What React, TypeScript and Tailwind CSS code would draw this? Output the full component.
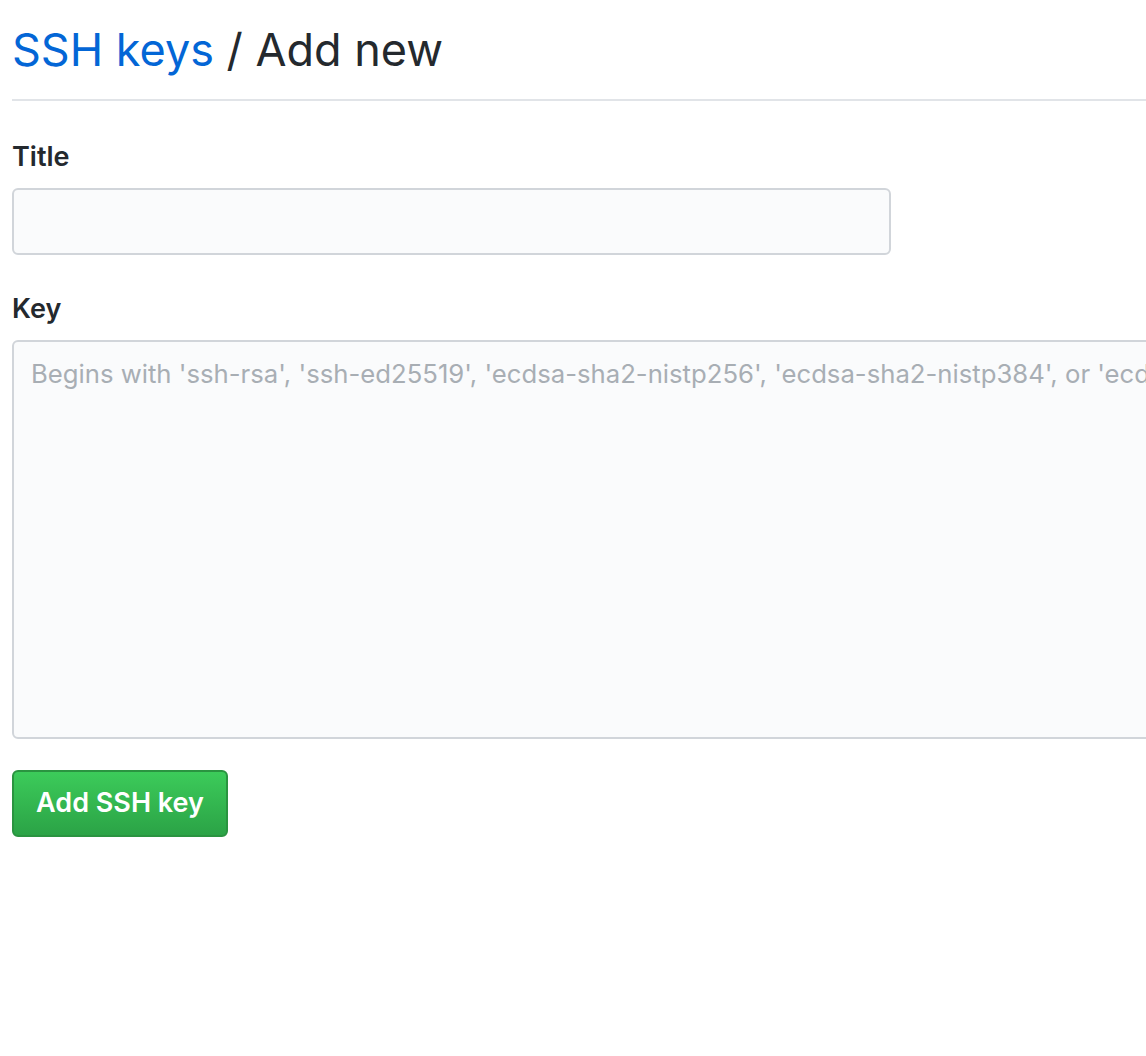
import React from "react";

export default function App() {
  return (
    <div className="w-full min-h-[1056px] overflow-hidden bg-white font-['Inter',sans-serif] text-[#24292e]">
      <div className="pl-3 pt-[20px]">
        <div className="border-b-2 border-[#e1e4e8] pb-[19px]">
          <h1 className="text-[45px] font-normal leading-[60px]">
            <a className="text-[#0366d6]" href="#">SSH keys</a> / Add new
          </h1>
        </div>
        <div className="mt-[38px]">
          <label className="block text-[27px] font-semibold leading-[36px]">Title</label>
          <input
            className="mt-[13px] block h-[67px] w-[879px] rounded-[6px] border-2 border-[#d1d5da] bg-[#fafbfc] px-4 text-[24px] outline-none"
            type="text"
          />
        </div>
        <div className="mt-[36px]">
          <label className="block text-[27px] font-semibold leading-[36px]">Key</label>
          <textarea
            className="mt-[13px] block h-[399px] w-[1500px] resize-none rounded-[6px] border-2 border-[#d1d5da] bg-[#fafbfc] px-[17px] py-[14px] text-[25.7px] leading-[36px] placeholder:text-[#a8aeb4] outline-none"
            placeholder="Begins with 'ssh-rsa', 'ssh-ed25519', 'ecdsa-sha2-nistp256', 'ecdsa-sha2-nistp384', or 'ecdsa-sha2-nistp521'"
          />
        </div>
        <button className="mt-[31px] h-[67px] w-[216px] rounded-[6px] border-2 border-[#2a9440] bg-gradient-to-b from-[#3ccb5a] to-[#2ba346] text-[27px] font-semibold text-white">
          Add SSH key
        </button>
      </div>
    </div>
  );
}
